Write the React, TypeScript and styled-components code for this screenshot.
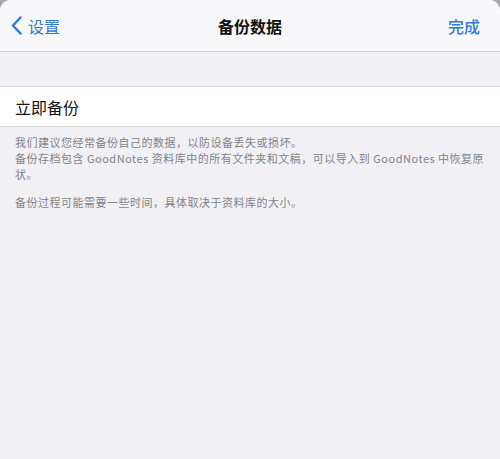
import React from "react";
import styled, { createGlobalStyle } from "styled-components";

const font = `"Noto Sans CJK SC", "Noto Sans", sans-serif`;
const tint = "#3478d0";

const GlobalStyle = createGlobalStyle`
  html, body {
    margin: 0;
    padding: 0;
    background: #a9a9ad;
  }
  body {
    font-family: ${font};
  }
`;

const Sheet = styled.div`
  width: 500px;
  height: 459px;
  background: #f1f0f5;
  border-radius: 11px 11px 0 0;
  overflow: hidden;
  display: flex;
  flex-direction: column;
`;

const NavBar = styled.header`
  height: 51px;
  flex-shrink: 0;
  background: #f8f8fa;
  border-bottom: 1px solid #d4d4d8;
  display: grid;
  grid-template-columns: 1fr auto 1fr;
  align-items: center;
  padding: 0 20px 0 11px;
`;

const BackButton = styled.div`
  display: flex;
  align-items: center;
  gap: 6px;
  color: ${tint};
  font-size: 16px;
  justify-self: start;
`;

const Title = styled.div`
  font-size: 16px;
  font-weight: 600;
  color: #111;
  padding-left: 9px;
`;

const Done = styled.div`
  justify-self: end;
  color: ${tint};
  font-size: 16px;
  font-weight: 500;
`;

const Spacer = styled.div`
  height: 34px;
`;

const Cell = styled.div`
  height: 39px;
  background: #fff;
  border-top: 1px solid #d8d8dc;
  border-bottom: 1px solid #d8d8dc;
  display: flex;
  align-items: center;
  padding-left: 15px;
  font-size: 16px;
  color: #111;
`;

const Footer = styled.div`
  padding: 7px 12px 0 15px;
  font-size: 11px;
  line-height: 16px;
  letter-spacing: 0.5px;
  color: #838388;
`;

const Paragraph = styled.p`
  margin: 0 0 12px;
`;

const Chevron = () => (
  <svg width="11" height="19" viewBox="0 0 11 19" fill="none">
    <path d="M9.5 1.5 L2 9.5 L9.5 17.5" stroke={tint} strokeWidth="2.4" strokeLinecap="round" strokeLinejoin="round" />
  </svg>
);

export default function App() {
  return (
    <>
      <GlobalStyle />
      <Sheet>
        <NavBar>
          <BackButton>
            <Chevron />
            设置
          </BackButton>
          <Title>备份数据</Title>
          <Done>完成</Done>
        </NavBar>
        <Spacer />
        <Cell>立即备份</Cell>
        <Footer>
          <Paragraph>
            我们建议您经常备份自己的数据，以防设备丢失或损坏。
            <br />
            备份存档包含 GoodNotes 资料库中的所有文件夹和文稿，可以导入到 GoodNotes 中恢复原状。
          </Paragraph>
          <Paragraph>备份过程可能需要一些时间，具体取决于资料库的大小。</Paragraph>
        </Footer>
      </Sheet>
    </>
  );
}
